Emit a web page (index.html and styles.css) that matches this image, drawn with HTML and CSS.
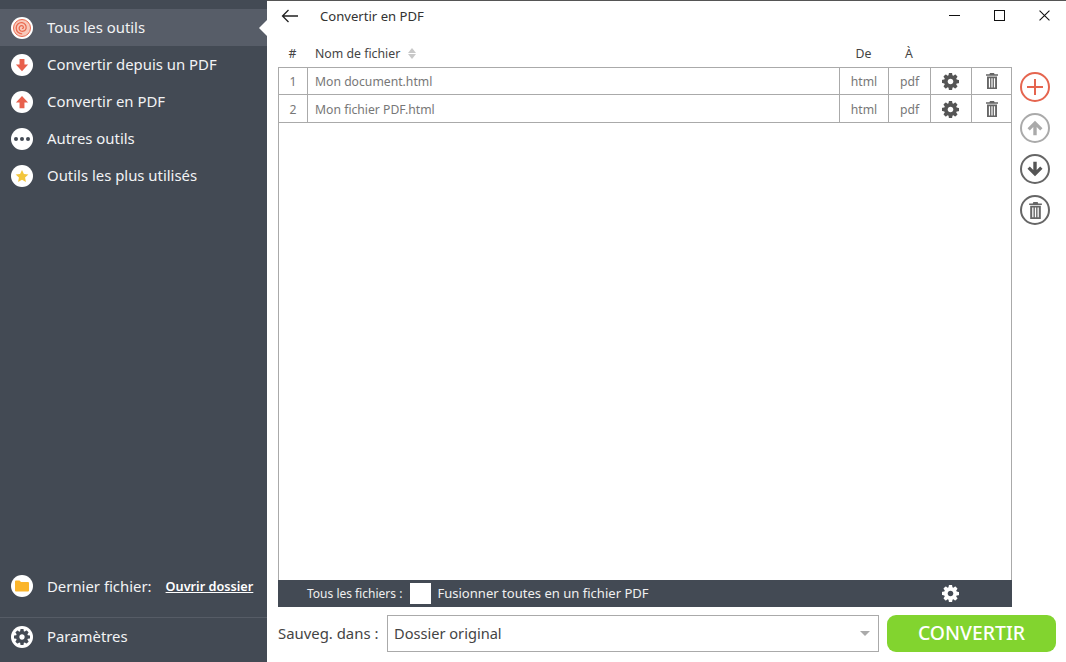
FILE: index.html
```html
<!DOCTYPE html>
<html lang="fr">
<head>
<meta charset="utf-8">
<title>Convertir en PDF</title>
<link rel="stylesheet" href="styles.css">
</head>
<body>
<svg class="defs" width="0" height="0" aria-hidden="true">
  <symbol id="cog" viewBox="128 128 1536 1536"><path d="M1152 896q0-106-75-181t-181-75-181 75-75 181 75 181 181 75 181-75 75-181zm512-109v222q0 12-8 23t-20 13l-185 28q-19 54-39 91 35 50 107 138 10 12 10 25t-9 23q-27 37-99 108t-94 71q-12 0-26-9l-138-108q-44 23-91 38-16 136-29 186-7 28-36 28h-222q-14 0-24.500-8.500t-11.500-21.500l-28-184q-49-16-90-37l-141 107q-10 9-25 9-14 0-25-11-126-114-165-168-7-10-7-23 0-12 8-23 15-21 51-66.500t54-70.500q-27-50-41-99l-183-27q-13-2-21-12.500t-8-23.500v-222q0-12 8-23t19-13l186-28q14-46 39-92-40-57-107-138-10-12-10-24 0-10 9-23 26-36 98.500-107.500t94.500-71.500q13 0 26 10l138 107q44-23 91-38 16-136 29-186 7-28 36-28h222q14 0 24.500 8.500t11.500 21.500l28 184q49 16 90 37l142-107q9-9 24-9 13 0 25 10 129 119 165 170 7 8 7 22 0 12-8 23-15 21-51 66.500t-54 70.500q26 50 41 98l183 28q13 2 21 12.500t8 23.500z"/></symbol>
  <symbol id="trash" viewBox="0 0 12 16"><path d="M4 0h4l.6 1.300H12v1.500H0V1.300h3.400zM1 3.600h10V16H1zM2.900 5.200v9.200h1.200V5.200zM5.400 5.200v9.200h1.200V5.200zM7.900 5.200v9.200h1.200V5.200z" fill-rule="evenodd"/></symbol>
  <symbol id="solid-down" viewBox="0 0 16 16"><path d="M5.200 1h5.600v6.500H15L8 15 1 7.500h4.200z"/></symbol>
  <symbol id="solid-up" viewBox="0 0 16 16"><path d="M5.200 15h5.600V8.500H15L8 1 1 8.500h4.200z"/></symbol>
  <symbol id="arrow-up" viewBox="0 0 16 16"><path d="M8 .8L15.500 8.300 13.200 10.600 9.700 7.100V15.200H6.300V7.100L2.800 10.600.5 8.300z"/></symbol>
  <symbol id="arrow-down" viewBox="0 0 16 16"><path d="M8 15.200L15.500 7.700 13.200 5.400 9.700 8.900V.8H6.300V8.900L2.800 5.400.5 7.700z"/></symbol>
</svg>

<aside class="sidebar">
  <nav class="nav">
    <a class="nav-item active">
      <span class="badge">
        <svg class="spiral" viewBox="0 0 18 18"><circle class="spiral-disc" cx="9" cy="9" r="8.500"/><path d="M9 9.300c.9.500 1.800-.4 1.400-1.400-.5-1.400-2.500-1.600-3.500-.5-1.300 1.400-.8 3.800.9 4.600 2.200 1 4.800-.3 5.300-2.600.6-2.800-1.400-5.400-4.100-5.700-3.200-.4-5.800 2.100-5.800 5.200 0 3.400 2.800 6 6 5.900"/></svg>
      </span>
      <span class="label">Tous les outils</span>
    </a>
    <a class="nav-item">
      <span class="badge"><svg class="glyph red"><use href="#solid-down"/></svg></span>
      <span class="label">Convertir depuis un PDF</span>
    </a>
    <a class="nav-item">
      <span class="badge"><svg class="glyph red"><use href="#solid-up"/></svg></span>
      <span class="label">Convertir en PDF</span>
    </a>
    <a class="nav-item">
      <span class="badge dots"><i></i><i></i><i></i></span>
      <span class="label">Autres outils</span>
    </a>
    <a class="nav-item">
      <span class="badge"><svg class="glyph star" viewBox="0 0 16 16"><path d="M8 1l2.200 4.700 5.100.6-3.800 3.500 1 5L8 12.300 3.500 14.800l1-5L.7 6.300l5.100-.6z"/></svg></span>
      <span class="label">Outils les plus utilisés</span>
    </a>
  </nav>
  <div class="last-file">
    <span class="badge"><svg class="glyph folder" viewBox="0 0 14 12"><path d="M0 1.500Q0 .5 1 .5h3.500L6 2h7q1 0 1 1v7.500q0 1-1 1H1q-1 0-1-1z"/></svg></span>
    <span class="label last-label">Dernier fichier:</span>
    <a class="open-link">Ouvrir dossier</a>
  </div>
  <div class="settings">
    <span class="badge"><svg class="cog-dark"><use href="#cog"/></svg></span>
    <span class="label">Paramètres</span>
  </div>
</aside>

<main class="main">
  <header class="titlebar">
    <svg class="back" viewBox="0 0 18 14"><path d="M17 7H1.500M7.500 1L1.500 7l6 6"/></svg>
    <h1 class="title">Convertir en PDF</h1>
    <div class="win-controls">
      <span class="win-min"></span>
      <span class="win-max"></span>
      <svg class="win-close" viewBox="0 0 10 10"><path d="M.5.5l9 9M9.500.5l-9 9"/></svg>
    </div>
  </header>

  <div class="workspace">
    <section class="list">
      <div class="cols head">
        <span class="center">#</span>
        <span class="name-head">Nom de fichier<span class="sort"><i class="up"></i><i class="down"></i></span></span>
        <span class="center">De</span>
        <span class="center">À</span>
      </div>
      <div class="table">
        <div class="rows">
          <div class="cols row">
            <span class="cell center">1</span>
            <span class="cell name">Mon document.html</span>
            <span class="cell center">html</span>
            <span class="cell center">pdf</span>
            <span class="cell center"><svg class="cog"><use href="#cog"/></svg></span>
            <span class="cell center"><svg class="trash"><use href="#trash"/></svg></span>
          </div>
          <div class="cols row">
            <span class="cell center">2</span>
            <span class="cell name">Mon fichier PDF.html</span>
            <span class="cell center">html</span>
            <span class="cell center">pdf</span>
            <span class="cell center"><svg class="cog"><use href="#cog"/></svg></span>
            <span class="cell center"><svg class="trash"><use href="#trash"/></svg></span>
          </div>
        </div>
        <div class="all-files">
          <span class="all-label">Tous les fichiers :</span>
          <span class="check"></span>
          <span class="merge">Fusionner toutes en un fichier PDF</span>
          <svg class="cog cog-white"><use href="#cog"/></svg>
        </div>
      </div>
    </section>
    <div class="tools">
      <button class="tool add"><svg viewBox="0 0 16 16"><path d="M8 0v16M0 8h16"/></svg></button>
      <button class="tool up"><svg class="fill"><use href="#arrow-up"/></svg></button>
      <button class="tool down"><svg class="fill"><use href="#arrow-down"/></svg></button>
      <button class="tool del"><svg class="fill trash-big"><use href="#trash"/></svg></button>
    </div>
  </div>

  <footer class="save">
    <span class="save-label">Sauveg. dans :</span>
    <div class="select">
      <span class="select-text">Dossier original</span>
      <i class="caret"></i>
    </div>
    <button class="convert">CONVERTIR</button>
  </footer>
</main>
</body>
</html>
```

FILE: styles.css
```css
* { box-sizing: border-box; }
html, body { height: 100%; }
body {
  margin: 0;
  display: flex;
  height: 662px;
  overflow: hidden;
  background: #fff;
  font-family: "Noto Sans", "Open Sans", sans-serif;
  color: #444;
}
.defs { position: absolute; }

.sidebar {
  width: 267px;
  flex: none;
  display: flex;
  flex-direction: column;
  background: #434a54;
  color: #f2f3f4;
  font-size: 14.900px;
  padding-top: 9px;
}
.label { margin-bottom: 2px; white-space: nowrap; }
.nav { flex: 1; display: flex; flex-direction: column; }
.nav-item {
  height: 37px;
  display: flex;
  align-items: center;
  gap: 14px;
  padding-left: 11px;
  position: relative;
}
.nav-item.active { background: #575d68; }
.nav-item.active::after {
  content: "";
  position: absolute;
  right: 0;
  top: 11px;
  border: 8px solid transparent;
  border-left-width: 0;
  border-right: 8px solid #fff;
}
.badge {
  width: 22px;
  height: 22px;
  flex: none;
  border-radius: 50%;
  background: #fff;
  display: flex;
  align-items: center;
  justify-content: center;
}
.spiral { width: 18px; height: 18px; fill: none; stroke: #ea6a50; stroke-width: 1.300; }
.spiral-disc { fill: #f8c9bb; stroke-width: 1; }
.glyph { width: 14px; height: 14px; }
.red { fill: #e8604c; }
.star { fill: #f3c63c; }
.folder { fill: #fbb52b; }
.dots { gap: 2px; }
.dots i { width: 4px; height: 4px; border-radius: 50%; background: #434a54; }
.cog-dark { width: 16px; height: 16px; fill: #434a54; }

.last-file {
  height: 57px;
  display: flex;
  align-items: center;
  padding: 0 14px 7px 11px;
  gap: 14px;
  border-bottom: 1px solid #565c66;
}
.last-label { flex: 1; margin-bottom: 0; }
.open-link { font-size: 12.700px; font-weight: 600; text-decoration: underline; color: #fff; white-space: nowrap; }
.settings {
  height: 44px;
  display: flex;
  align-items: center;
  gap: 14px;
  padding: 0 0 7px 11px;
}

.main {
  flex: 1;
  min-width: 0;
  display: flex;
  flex-direction: column;
  border-top: 1px solid #555;
}
.titlebar {
  height: 39px;
  flex: none;
  display: flex;
  align-items: center;
  padding: 0 0 9px 14px;
}
.back { width: 18px; height: 14px; fill: none; stroke: #222; stroke-width: 1.300; flex: none; }
.title { margin: 0 0 0 21px; font-size: 13.100px; font-weight: 400; color: #333; flex: 1; }
.win-controls { display: flex; align-items: center; gap: 34px; padding: 0 16px 2px 0; }
.win-min { width: 11px; height: 1px; background: #111; }
.win-max { width: 11px; height: 11px; border: 1px solid #111; }
.win-close { width: 11px; height: 11px; stroke: #111; stroke-width: 1; fill: none; }

.workspace {
  flex: 1;
  min-height: 0;
  display: flex;
  padding-left: 11px;
}
.list { width: 734px; display: flex; flex-direction: column; }
.cols {
  display: grid;
  grid-template-columns: 29px 532px 49px 42px 41px 41px;
}
.head { height: 27px; align-items: center; font-size: 12.300px; color: #444; }
.center { display: flex; align-items: center; justify-content: center; }
.name-head { padding-left: 8px; display: flex; align-items: center; }
.sort { display: inline-flex; flex-direction: column; gap: 1px; margin-left: 8px; }
.sort i { width: 0; height: 0; border-left: 4px solid transparent; border-right: 4px solid transparent; }
.sort .up { border-bottom: 5px solid #c8c8c8; }
.sort .down { border-top: 5px solid #c8c8c8; }

.table {
  flex: 1;
  display: flex;
  flex-direction: column;
  border: 1px solid #aaa;
  border-bottom: 0;
}
.rows { flex: 1; }
.row {
  height: 28px;
  border-bottom: 1px solid #aaa;
  grid-template-columns: 29px 532px 49px 42px 41px 39px;
  font-size: 12.200px;
  color: #777;
}
.row:first-child { height: 27px; }
.row + .row .cell { padding-top: 1px; }
.cell { border-right: 1px solid #aaa; }
.cell:last-child { border-right: 0; }
.name { display: flex; align-items: center; padding-left: 7px; }
.cog { width: 17px; height: 17px; fill: #555; margin-right: 1px; }
.trash { width: 12px; height: 16px; fill: #666; }

.all-files {
  height: 27px;
  margin: 0 -1px;
  background: #434a54;
  color: #f0f0f0;
  display: flex;
  align-items: center;
  font-size: 12px;
}
.all-label { margin-left: 29px; }
.check { width: 21px; height: 21px; background: #fff; margin-left: 8px; margin-right: 6px; }
.merge { flex: 1; font-size: 13.050px; margin-bottom: 1px; }
.cog-white { fill: #fff; margin-right: 53px; }

.tools {
  width: 46px;
  display: flex;
  flex-direction: column;
  align-items: center;
  gap: 11px;
  padding: 32px 0 0 0;
}
.tool {
  width: 30px;
  height: 30px;
  padding: 0;
  border-radius: 50%;
  background: #fff;
  border: 2px solid #666;
  display: flex;
  align-items: center;
  justify-content: center;
}
.tool svg { display: block; }
.tool .fill { width: 16px; height: 16px; fill: #555; }
.tool.add { border-color: #e5654f; }
.tool.add svg { width: 16px; height: 16px; stroke: #e5654f; stroke-width: 2; fill: none; }
.tool.up { border-color: #aaa; }
.tool.up .fill { fill: #aaa; }
.tool .trash-big { width: 13px; height: 17px; fill: #666; }

.save {
  height: 55px;
  flex: none;
  display: flex;
  align-items: flex-start;
  padding: 8px 10px 0 11px;
}
.save-label { width: 109px; height: 37px; line-height: 36px; font-size: 14.900px; color: #444; flex: none; }
.select {
  width: 492px;
  height: 37px;
  border: 1px solid #aaa;
  display: flex;
  align-items: center;
  justify-content: space-between;
  padding: 0 8px 0 6px;
  font-size: 14.600px;
  color: #444;
}
.select-text { margin-bottom: 2px; }
.caret { width: 0; height: 0; border: 5px solid transparent; border-top: 5px solid #aaa; border-bottom: 0; }
.convert {
  width: 169px;
  height: 37px;
  margin-left: 8px;
  border: 0;
  border-radius: 9px;
  background: #82d42f;
  color: #fff;
  font: 500 19.400px "Noto Sans", sans-serif;
  padding: 0 0 2px;
}
```
